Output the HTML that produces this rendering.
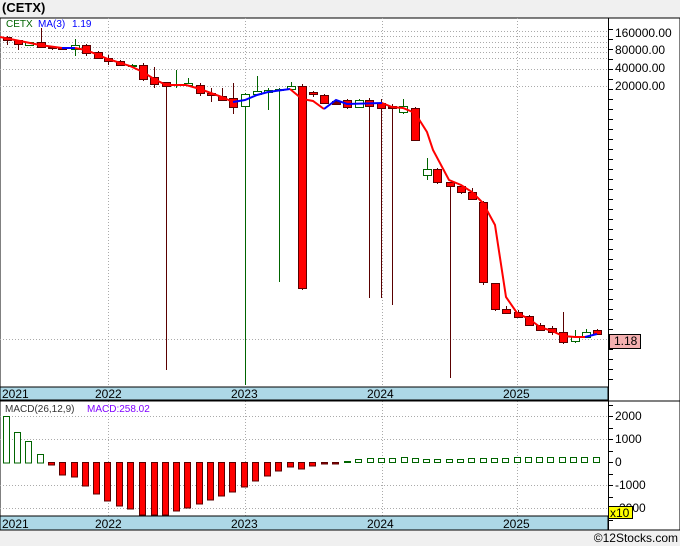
<!DOCTYPE html>
<html><head><meta charset="utf-8"><style>
html,body{margin:0;padding:0;background:#f0f0f0;}
body{width:680px;height:546px;overflow:hidden;font-family:"Liberation Sans",sans-serif;}
svg{display:block}
</style></head><body>
<svg id="s" width="680" height="546" xmlns="http://www.w3.org/2000/svg" font-family="Liberation Sans, sans-serif">
<rect x="0" y="0" width="680" height="546" fill="#f0f0f0"/>
<text x="2" y="12" font-size="13" font-weight="bold" fill="#000">(CETX)</text>
<rect x="0" y="18" width="680" height="512" fill="#fff" stroke="#000" stroke-width="1"/>
<g id="grid" stroke="#aaa" stroke-dasharray="1,2" stroke-width="1"></g>
<rect x="0" y="387" width="608" height="13" fill="#add8e6" stroke="#000"/>
<rect x="0" y="516" width="608" height="14" fill="#add8e6" stroke="#000"/>
<line x1="608.5" y1="18" x2="608.5" y2="530" stroke="#000"/>
<line x1="0" y1="401" x2="680" y2="401" stroke="#000"/>
<g id="c"></g>
<g font-size="12" fill="#000">
<text x="2" y="398">2021</text><text x="95" y="398">2022</text><text x="231" y="398">2023</text><text x="367" y="398">2024</text><text x="503" y="398">2025</text>
<text x="2" y="528">2021</text><text x="95" y="528">2022</text><text x="231" y="528">2023</text><text x="367" y="528">2024</text><text x="503" y="528">2025</text>
</g>
<g font-size="12" fill="#000">
<text x="615" y="37">160000.00</text><text x="615" y="54">80000.00</text><text x="615" y="72">40000.00</text><text x="615" y="90">20000.00</text>
<text x="615" y="420">2000</text><text x="615" y="443">1000</text><text x="615" y="466">0</text><text x="615" y="489">-1000</text><text x="615" y="512">-2000</text>
</g>
<rect x="609.5" y="334.5" width="31" height="14" fill="#f4b0b0" stroke="#000"/>
<text x="614" y="345" font-size="12" fill="#000">1.18</text>
<rect x="608.5" y="506.5" width="24" height="12" fill="#ffff00" stroke="#000"/>
<text x="610" y="517" font-size="12" fill="#000">x10</text>
<text x="6" y="27" font-size="10" fill="#006400">CETX</text>
<text x="38" y="27" font-size="10" fill="#0000ff">MA(3)</text>
<text x="72" y="27" font-size="10" fill="#0000ff">1.19</text>
<text x="5" y="412" font-size="10" fill="#333">MACD(26,12,9)</text>
<text x="87" y="412" font-size="10" fill="#7f00ff">MACD:258.02</text>
<text x="678" y="542" font-size="12" fill="#000" text-anchor="end">©12Stocks.com</text>
</svg>
<script>
var NS="http://www.w3.org/2000/svg",c=document.getElementById('c'),g=document.getElementById('grid');
function el(p,t,a){var e=document.createElementNS(NS,t);for(var k in a)e.setAttribute(k,a[k]);p.appendChild(e);return e;}
[108,245,382,517].forEach(function(x){el(g,'line',{x1:x+.5,y1:18,x2:x+.5,y2:387});el(g,'line',{x1:x+.5,y1:401,x2:x+.5,y2:516});});
[31,36,42,47,52,58,69,86,339].forEach(function(y){el(g,'line',{x1:0,y1:y+.5,x2:608,y2:y+.5});});
[416,439,485,508].forEach(function(y){el(g,'line',{x1:0,y1:y+.5,x2:608,y2:y+.5});});
for(var y=29;y<387;y+=10)el(c,'line',{x1:608,y1:y+.5,x2:613,y2:y+.5,stroke:'#000'});
[405,416,428,439,451,462,474,485,497,508,520].forEach(function(y){el(c,'line',{x1:608,y1:y+.5,x2:613,y2:y+.5,stroke:'#000'});});
var C=[[7,37,40,36,45,'r'],[18,40,44,40,50,'r'],[29,42,45,42,46,'g'],[41,42,47,28,48,'r'],[52,47,48,46,50,'d'],[62,48,49,47,50,'r'],
[75,45,49,39,56,'g'],[86,45,53,44,56,'r'],[98,52,58,51,59,'r'],[108,58,61,55,65,'r'],[120,61,65,60,66,'r'],[132,65,66,64,67,'g'],
[143,65,79,63,81,'r'],[154,77,84,67,88,'r'],[166,82,86,82,370,'r'],[176,84,85,70,88,'g'],[188,83,85,78,86,'g'],[200,85,93,83,96,'r'],
[211,93,95,88,102,'r'],[222,96,100,88,101,'r'],[233,98,107,83,114,'r'],[245,94,106,93,385,'g'],[257,91,94,76,95,'g'],[268,90,92,88,110,'g'],
[279,89,90,88,282,'g'],[291,86,89,82,90,'g'],[302,86,288,84,290,'r'],[313,92,94,91,97,'r'],[324,95,103,94,104,'r'],[336,101,104,100,105,'d'],
[347,100,107,99,109,'r'],[359,100,107,99,108,'g'],[369,100,106,98,298,'r'],[381,103,108,99,298,'r'],[392,106,108,104,305,'d'],[403,106,112,99,114,'g'],
[415,108,140,107,141,'r'],[427,169,175,158,180,'g'],[437,169,182,168,184,'r'],[450,182,186,182,378,'r'],[461,186,192,186,194,'r'],[472,192,199,188,200,'r'],
[483,202,282,201,285,'r'],[495,283,309,283,311,'r'],[506,309,313,306,314,'r'],[518,312,317,310,318,'r'],[529,316,325,315,326,'r'],[540,325,330,323,331,'r'],
[552,328,332,326,335,'r'],[563,332,342,312,344,'r'],[575,336,341,330,343,'g'],[586,332,337,329,338,'g'],[597,330,334,329,335,'r']];
C.forEach(function(d){var col=d[5]=='g'?'#006400':'#5a0000';
el(c,'line',{x1:d[0]+.5,y1:d[3],x2:d[0]+.5,y2:d[4],stroke:col});
if(d[5]=='g')el(c,'rect',{x:d[0]-3.5,y:d[1]+.5,width:8,height:Math.max(1,d[2]-d[1]),fill:'#fff',stroke:col});
else el(c,'rect',{x:d[0]-3.5,y:d[1]+.5,width:8,height:Math.max(1,d[2]-d[1]),fill:d[5]=='d'?'#800000':'#ff0000',stroke:'#5a0000'});});
function pl(pts,col){el(c,'polyline',{points:pts,fill:'none',stroke:col,'stroke-width':2});}
pl("0,37 20,41 40,45 62,48",'#ff0000');pl("62,48 75,48",'#0000ff');
pl("75,48 86,50 108,59 130,66 143,72 154,79 166,85 186,85 200,89 222,97 233,102",'#ff0000');
pl("233,102 245,100 257,95 268,92 290,89",'#0000ff');
pl("290,89 302,99 313,101 324,109",'#ff0000');pl("324,109 336,100 347,104 382,103",'#0000ff');
pl("382,103 392,107 403,108 415,113 427,132 433,150 449,180 461,185 472,192 483,203 495,225 506,297 517,313 529,319 540,327 552,331 563,336 575,337 585,337",'#ff0000');
pl("585,337 597,334",'#0000ff');
var M=[[3,416],[14,432],[25,441],[37,454],[48,465],[59,475],[71,477],[82,486],[93,494],[104,501],[116,506],[127,509],[139,515],[151,515],[162,515],[173,511],[184,508],[196,504],[207,500],[218,496],[229,492],[241,487],[252,481],[264,476],[275,471],[287,467],[298,469],[309,466],[321,464],[332,464]];
M.forEach(function(m,i){var z=462.5;if(i<4)el(c,'rect',{x:m[0]+.5,y:m[1]+.5,width:6,height:z-m[1],fill:'#fff',stroke:'#006400'});
else el(c,'rect',{x:m[0]+.5,y:z,width:6,height:m[1]-z,fill:i>=28?'#a00000':'#ff0000',stroke:'#5a0000'});});
var H=[1,3,4,4,4,5,4,3,3,3,3,4,4,4,4,5,5,5,5,5,5,5,5];
for(var i=0;i<H.length;i++){var x=344+11.3*i;el(c,'rect',{x:Math.round(x)+.5,y:462.5-H[i],width:6,height:H[i],fill:'#fff',stroke:'#006400'});}
</script>
</body></html>
